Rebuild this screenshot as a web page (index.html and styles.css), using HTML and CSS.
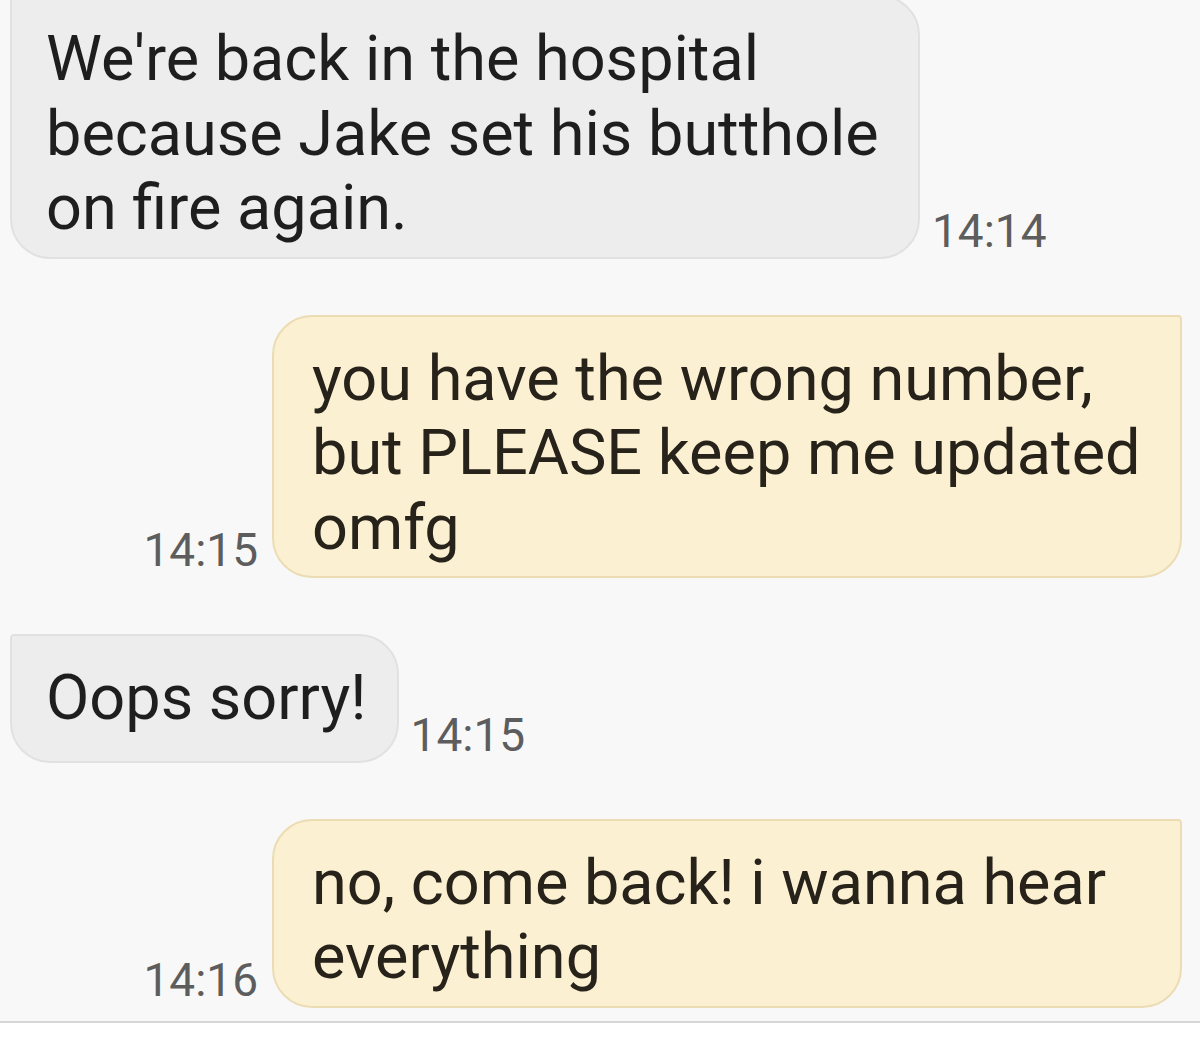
FILE: index.html
```html
<!DOCTYPE html>
<html lang="en">
<head>
  <meta charset="UTF-8">
  <meta name="viewport" content="width=device-width, initial-scale=1.0">
  <title>Messages</title>
  <link rel="stylesheet" href="styles.css">
</head>
<body>
  <div class="thread">
    <div class="message message-in message-first">
      <div class="bubble">We're back in the hospital because Jake set his butthole on fire again.</div>
      <span class="time">14:14</span>
    </div>

    <div class="message message-out">
      <span class="time">14:15</span>
      <div class="bubble">you have the wrong number, but PLEASE keep me updated omfg</div>
    </div>

    <div class="message message-in">
      <div class="bubble bubble-short">Oops sorry!</div>
      <span class="time">14:15</span>
    </div>

    <div class="message message-out">
      <span class="time">14:16</span>
      <div class="bubble">no, come back! i wanna hear everything</div>
    </div>
  </div>
  <div class="composer"></div>
</body>
</html>
```

FILE: styles.css
```css
:root {
  --page: #f8f8f8;
  --in-bg: #ededed;
  --in-border: #e1e1e1;
  --out-bg: #fbf0d1;
  --out-border: #ecdcb3;
  --text: #1e1e1e;
  --text-out: #27221a;
  --time: #5d5d5d;
}

* {
  margin: 0;
  padding: 0;
  box-sizing: border-box;
}

html,
body {
  height: 100%;
}

body {
  font-family: Roboto, "Liberation Sans", Arial, sans-serif;
  background: #ffffff;
  color: var(--text);
  overflow: hidden;
}

.thread {
  height: 1023px;
  background: var(--page);
  border-bottom: 2px solid #d6d6d6;
  display: flex;
  flex-direction: column;
  gap: 56px;
  padding: 0 18px 0 10px;
  overflow: hidden;
}

.message {
  display: flex;
  align-items: flex-end;
}

.message-in {
  justify-content: flex-start;
  gap: 12px;
}

.message-out {
  justify-content: flex-end;
  gap: 14px;
}

.message-first {
  margin-top: -5px;
}

.bubble {
  max-width: 910px;
  padding: 25px 18px 11px 34px;
  font-size: 63px;
  line-height: 74.5px;
  border-radius: 40px;
}

.message-in .bubble {
  background: var(--in-bg);
  border: 2px solid var(--in-border);
  border-top-left-radius: 4px;
}

.message-out .bubble {
  background: var(--out-bg);
  border: 2px solid var(--out-border);
  border-top-right-radius: 4px;
  color: var(--text-out);
  padding-left: 38px;
}

.bubble-short {
  padding-right: 30px;
  padding-bottom: 25px;
}

.time {
  font-size: 46px;
  line-height: 46px;
  color: var(--time);
  margin-bottom: 5px;
  white-space: nowrap;
}

.composer {
  height: 28px;
  background: #ffffff;
}
```
